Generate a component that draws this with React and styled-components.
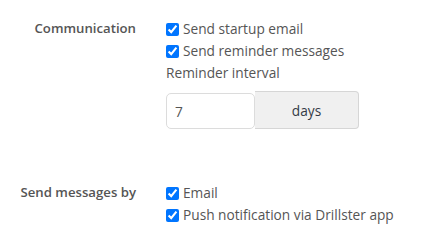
import React from "react";
import styled, { createGlobalStyle } from "styled-components";

const Global = createGlobalStyle`
  html, body { margin: 0; padding: 0; background: #fff; }
  body {
    font-family: "Open Sans", "Noto Sans", sans-serif;
    font-size: 13.7px;
    color: #555;
  }
`;

const Form = styled.div`
  padding-top: 18px;
  display: flex;
  flex-direction: column;
  gap: 53px;
`;

const FieldRow = styled.div`
  display: grid;
  grid-template-columns: 136px 1fr;
  column-gap: 30px;
  align-items: start;
`;

const FieldLabel = styled.div`
  text-align: right;
  font-weight: 600;
  font-size: 13.2px;
  line-height: 20px;
  color: #555;
`;

const Controls = styled.div`
  display: flex;
  flex-direction: column;
`;

const CheckRow = styled.label`
  display: flex;
  align-items: center;
  height: 22px;
  line-height: 22px;
  white-space: nowrap;
`;

const Box = styled.input.attrs({ type: "checkbox" })`
  width: 13px;
  height: 13px;
  margin: 0 4px 0 0;
  accent-color: #0075ff;
`;

const Caption = styled.div`
  line-height: 22px;
`;

const InputGroup = styled.div`
  display: flex;
  align-items: flex-end;
  margin-top: 7px;
`;

const NumberInput = styled.input`
  box-sizing: border-box;
  width: 89px;
  height: 36px;
  border: 1px solid #dcdcdc;
  border-radius: 5px;
  padding: 0 8px;
  font: inherit;
  color: #555;
  background: #fff;
  outline: none;
`;

const Addon = styled.div`
  box-sizing: border-box;
  width: 104px;
  height: 38px;
  display: flex;
  align-items: center;
  justify-content: center;
  background: #f0f0f0;
  border: 1px solid #d6d6d6;
  border-left: none;
  border-radius: 0 4px 4px 0;
  color: #333a45;
`;

export default function App() {
  return (
    <>
      <Global />
      <Form>
        <FieldRow>
          <FieldLabel>Communication</FieldLabel>
          <Controls>
            <CheckRow>
              <Box defaultChecked />
              Send startup email
            </CheckRow>
            <CheckRow>
              <Box defaultChecked />
              Send reminder messages
            </CheckRow>
            <Caption>Reminder interval</Caption>
            <InputGroup>
              <NumberInput defaultValue="7" />
              <Addon>days</Addon>
            </InputGroup>
          </Controls>
        </FieldRow>
        <FieldRow>
          <FieldLabel>Send messages by</FieldLabel>
          <Controls>
            <CheckRow>
              <Box defaultChecked />
              Email
            </CheckRow>
            <CheckRow>
              <Box defaultChecked />
              Push notification via Drillster app
            </CheckRow>
          </Controls>
        </FieldRow>
      </Form>
    </>
  );
}
